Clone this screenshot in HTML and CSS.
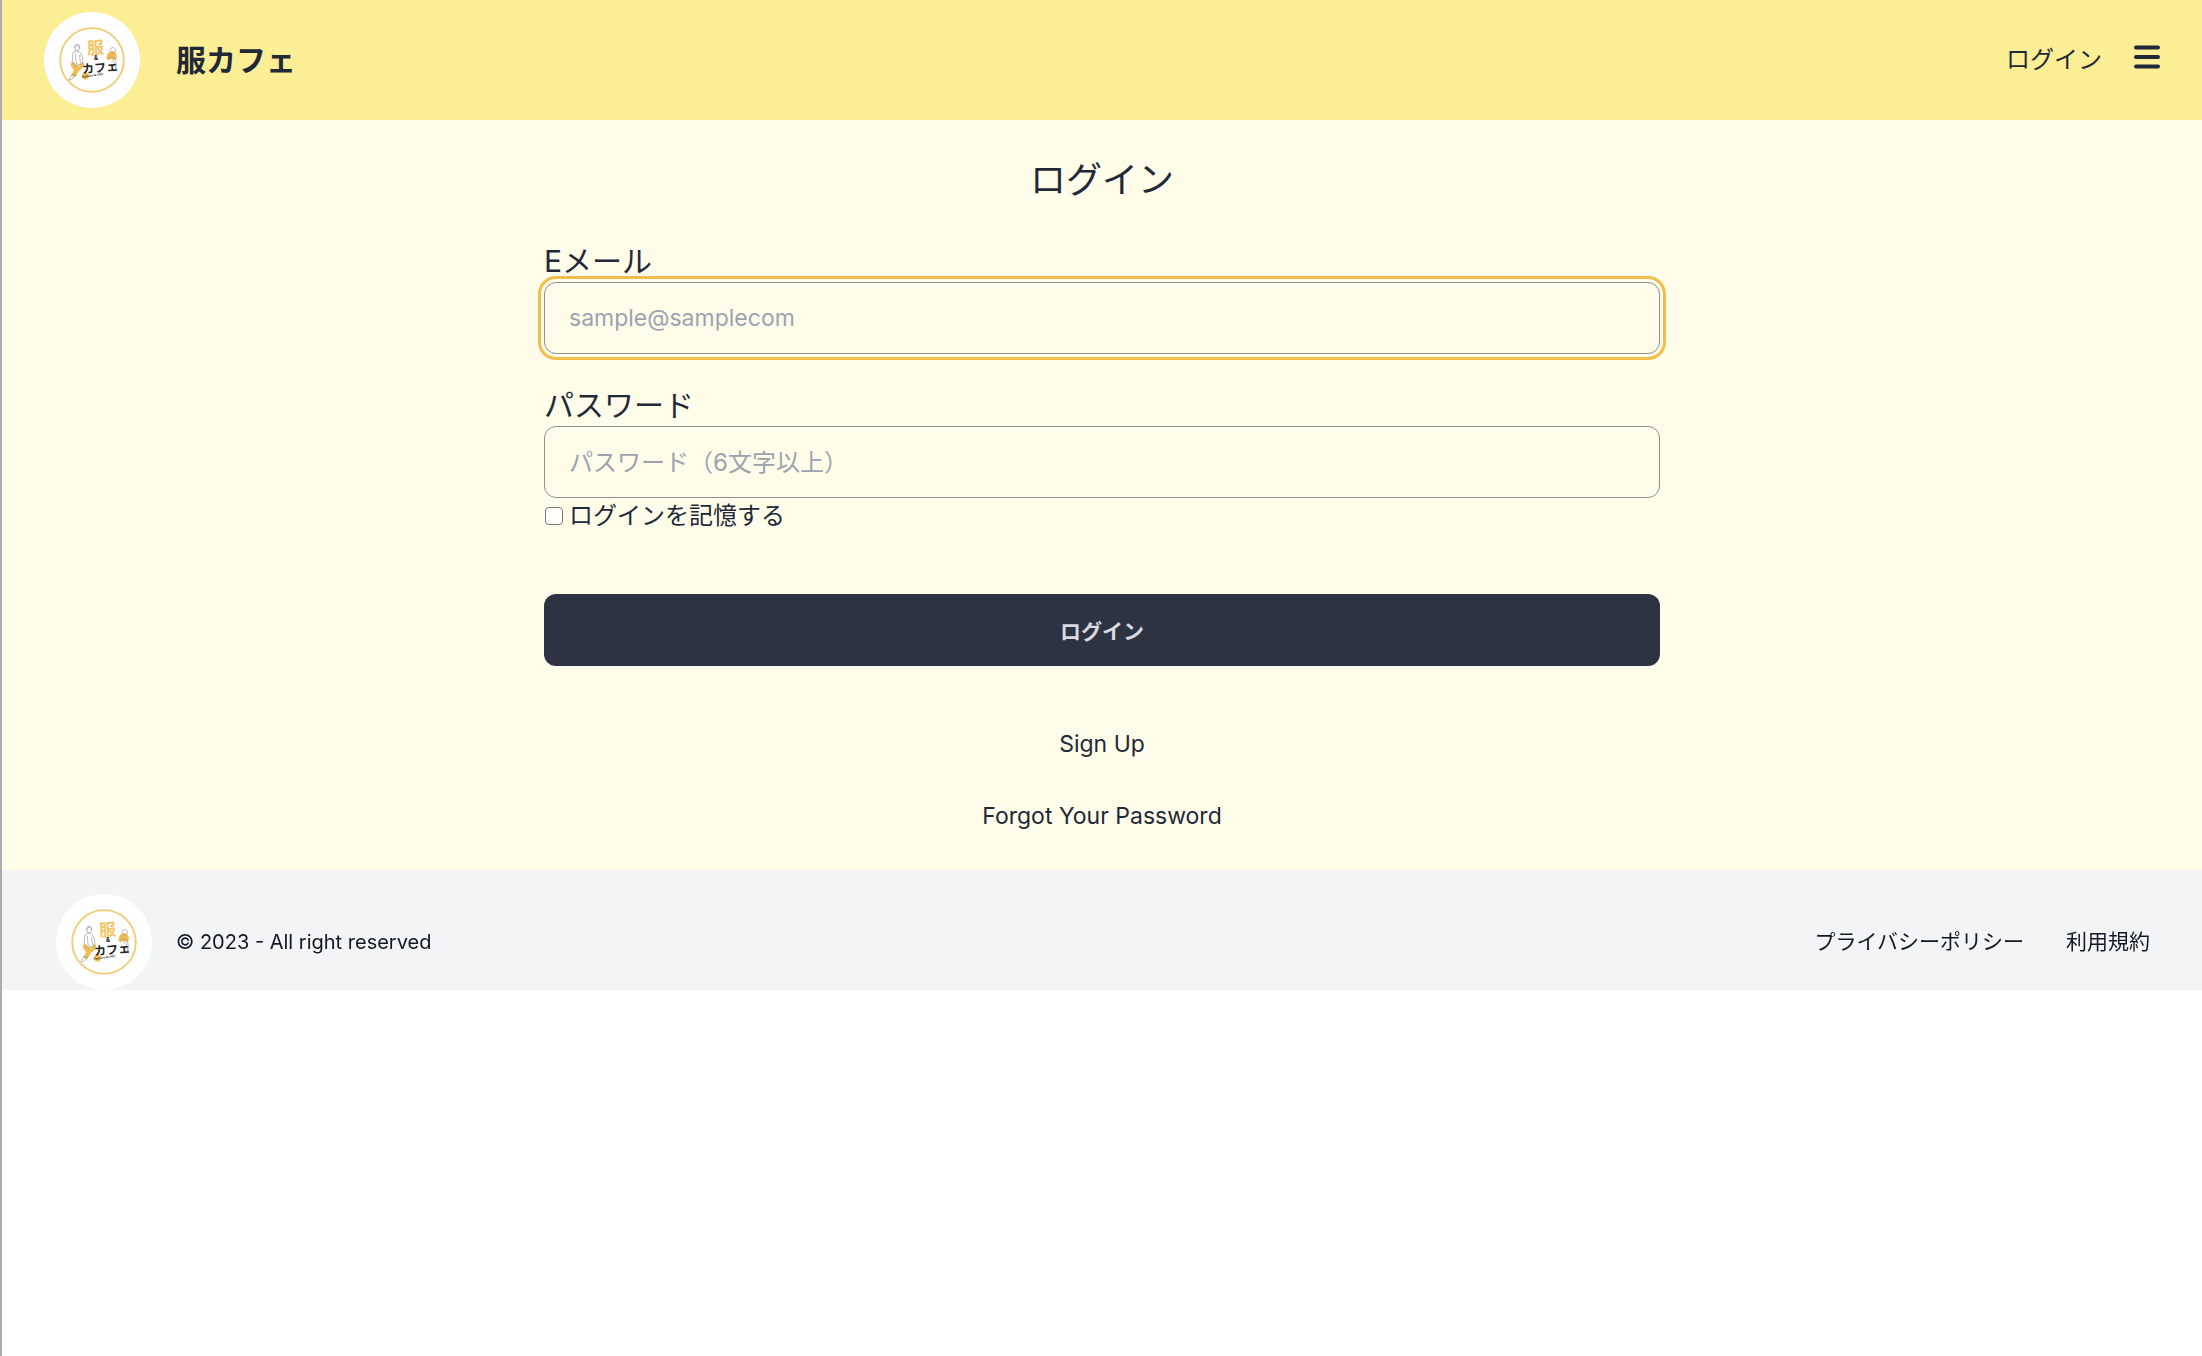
FILE: index.html
```html
<!DOCTYPE html>
<html lang="ja">
<head>
<meta charset="UTF-8" />
<meta name="viewport" content="width=device-width, initial-scale=1" />
<title>服カフェ | ログイン</title>
<link rel="stylesheet" href="styles.css">
</head>
<body>
  <!-- shared logo artwork -->
  <svg class="sprite" aria-hidden="true">
    <symbol id="logo" viewBox="0 0 96 96">
      <circle cx="48" cy="48" r="48" fill="#fff"/>
      <circle cx="48" cy="48" r="31.8" fill="none" stroke="#f3cb72" stroke-width="1.8"/>
      <!-- left figure -->
      <path d="M27 51l2.500-1 5 5 3.500-5 2.500 2-3 5-2.500 2-4 6.500-3.500-2 2.500-5.500-3-4z" fill="#f0bd50"/>
      <g fill="none" stroke="#8b8b8b" stroke-width="0.6" stroke-linejoin="round">
        <ellipse cx="33.200" cy="36" rx="2.300" ry="2.800"/>
        <path d="M30.600 36c-.5-5 5.500-4.800 5.200 0M32 39l-3 2-.8 9 3.800 4 3-1 4-2-.5-6-2-4-3-2zM31.500 42l.5 9 3 2M35.500 43l1 8"/>
        <path d="M28 62l-2 4-1 2 2.500-.5 4-4z"/>
      </g>
      <!-- right figure -->
      <path d="M62.500 47c0-4 1-6 3-7l3-1 3 1.500c1.500 1.500 1.500 4 1 6.500l-2 1-3-1-3 1z" fill="#f0bd50"/>
      <g fill="none" stroke="#8b8b8b" stroke-width="0.6">
        <path d="M66 39c-.5-4.500 6-4.500 5.500 0-1 2.500-4.500 2.500-5.500 0zM64 46l4-1 4 2M68 48l3 4 .5 6-1.500 1.500M71.500 48l.8 4-.3 6 1 1.500"/>
      </g>
      <circle cx="41.500" cy="64" r="3.400" fill="#f0bd50"/>
      <text class="logo-kanji" x="43" y="42" transform="rotate(-4 52 36)">服</text>
      <text class="logo-amp" x="50" y="48">&amp;</text>
      <text class="logo-kana" x="38" y="60" transform="rotate(-5 55 55)">カフェ</text>
      <text class="logo-script" x="38" y="66" transform="rotate(-9 38 66)">Fashion &amp; cafe</text>
    </symbol>
  </svg>

  <header class="navbar">
    <a class="brand" href="#">
      <svg class="logo" role="img" aria-label="服&amp;カフェ"><use href="#logo"/></svg>
      <span class="brand-name">服カフェ</span>
    </a>
    <nav class="navbar-menu">
      <a href="#">ログイン</a>
      <button type="button" class="menu-btn" aria-label="メニュー">
        <svg viewBox="0 0 26 24" aria-hidden="true">
          <path d="M2 2.500h22M2 12h22M2 21.500h22" stroke="currentColor" stroke-width="4" stroke-linecap="round"/>
        </svg>
      </button>
    </nav>
  </header>

  <main class="login">
    <h1>ログイン</h1>
    <form class="login-form" novalidate>
      <div class="field">
        <label for="email">Eメール</label>
        <input type="email" id="email" name="email" placeholder="sample@samplecom" autocomplete="email" autofocus />
      </div>
      <div class="field">
        <label for="password">パスワード</label>
        <input type="password" id="password" name="password" placeholder="パスワード（6文字以上）" autocomplete="current-password" />
      </div>
      <div class="remember">
        <input type="checkbox" id="remember" name="remember" />
        <label for="remember">ログインを記憶する</label>
      </div>
      <button type="submit" class="submit-btn">ログイン</button>
    </form>
    <div class="login-links">
      <a href="#">Sign Up</a>
      <a href="#">Forgot Your Password</a>
    </div>
  </main>

  <footer class="footer">
    <div class="footer-copy">
      <svg class="logo" role="img" aria-label="服&amp;カフェ"><use href="#logo"/></svg>
      <p>© 2023 - All right reserved</p>
    </div>
    <nav class="footer-links">
      <a href="#">プライバシーポリシー</a>
      <a href="#">利用規約</a>
    </nav>
  </footer>
</body>
</html>
```
FILE: styles.css
```css
:root {
  --header-color: #fcee95;
  --page-color: #fffdea;
  --footer-color: #f3f4f6;
  --text-color: #1f2937;
  --footer-text: #111827;
  --placeholder-color: #9ca3af;
  --button-color: #2d3340;
  --focus-color: #f1bd4b;
  --font-family: Inter, 'Noto Sans CJK JP', sans-serif;
}
* {
  box-sizing: border-box;
}
body {
  margin: 0;
  min-height: 100vh;
  border-left: 2px solid #acacae;
  background: #fff;
  color: var(--text-color);
  font-family: var(--font-family);
  font-size: 24px;
  line-height: 36px;
}
a {
  color: inherit;
  text-decoration: none;
}
.sprite {
  display: none;
}
.logo {
  display: block;
  width: 96px;
  height: 96px;
}
.logo-kanji {
  font-size: 17px;
  font-weight: 700;
  fill: #f3c668;
}
.logo-amp {
  font-size: 6px;
  font-weight: 700;
  fill: #222;
}
.logo-kana {
  font-size: 12px;
  font-weight: 700;
  fill: #222;
}
.logo-script {
  font-size: 3px;
  font-style: italic;
  font-weight: 700;
  fill: #333;
}

.navbar {
  display: flex;
  justify-content: space-between;
  align-items: center;
  padding: 12px 42px;
  background: var(--header-color);
}
.brand {
  display: flex;
  align-items: center;
  gap: 36px;
}
.brand-name {
  font-size: 30px;
  font-weight: 700;
}
.navbar-menu {
  display: flex;
  align-items: center;
  gap: 32px;
}
.menu-btn {
  display: block;
  padding: 0 0 6px;
  border: none;
  background: none;
  color: inherit;
  cursor: pointer;
}
.menu-btn svg {
  display: block;
  width: 26px;
  height: 24px;
}

.login {
  padding: 36px 18px;
  background: var(--page-color);
}
h1 {
  margin: 0 0 36px;
  font-size: 36px;
  font-weight: 400;
  line-height: 48px;
  text-align: center;
}
.login-form {
  max-width: 1116px;
  margin: 0 auto;
}
.field + .field {
  margin-top: 30px;
}
.field label {
  display: block;
  font-size: 30px;
  line-height: 42px;
}
.field input {
  display: block;
  width: 100%;
  height: 72px;
  padding: 0 24px;
  border: 1px solid #8e8f8e;
  border-radius: 12px;
  background: transparent;
  color: inherit;
  font: inherit;
}
.field input[type="email"] {
  font-size: 23px;
}
.field input::placeholder {
  color: var(--placeholder-color);
}
.field input:focus {
  outline: 3px solid var(--focus-color);
  outline-offset: 3px;
}
.remember {
  display: flex;
  align-items: center;
  gap: 6px;
}
.remember input {
  appearance: none;
  width: 18px;
  height: 18px;
  margin: 0 0 0 1px;
  border: 1px solid #767676;
  border-radius: 4px;
  background: #fff;
}
.remember input:checked {
  background: var(--focus-color);
}
.submit-btn {
  display: block;
  width: 100%;
  height: 72px;
  margin-top: 60px;
  border: none;
  border-radius: 12px;
  background: var(--button-color);
  color: #d8dae2;
  font-family: inherit;
  font-size: 21px;
  font-weight: 700;
  cursor: pointer;
}
.login-links {
  display: flex;
  flex-direction: column;
  align-items: center;
  gap: 36px;
  margin-top: 60px;
  font-size: 23px;
}

.footer {
  display: flex;
  justify-content: space-between;
  align-items: center;
  padding: 24px 52px 0 54px;
  background: var(--footer-color);
  color: var(--footer-text);
  font-size: 21px;
}
.footer-copy {
  display: flex;
  align-items: center;
  gap: 24px;
}
.footer-copy p {
  margin: 0;
  font-size: 20px;
}
.footer-links {
  display: flex;
  gap: 42px;
}
```
